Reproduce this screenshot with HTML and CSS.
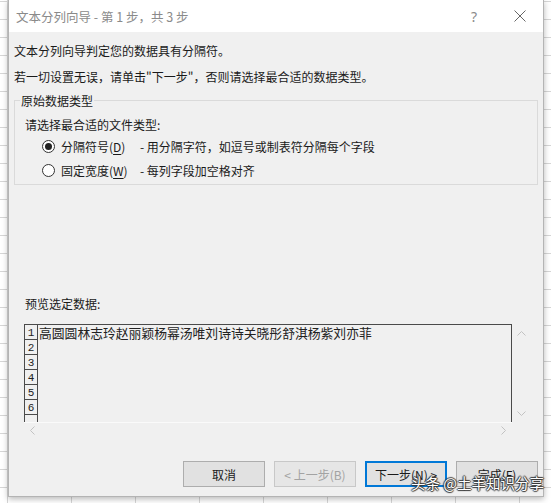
FILE: index.html
```html
<!DOCTYPE html>
<html lang="zh-CN">
<head>
<meta charset="utf-8">
<title>文本分列向导</title>
<link rel="stylesheet" href="styles.css">
</head>
<body>
<div class="dialog">
  <div class="titlebar">
    <span class="title">文本分列向导 - 第 1 步，共 3 步</span>
    <span class="tb-btn help">?</span>
    <span class="tb-btn close">
      <svg width="12" height="12" viewBox="0 0 12 12"><path d="M0.5 0.5 L11.5 11.5 M11.5 0.5 L0.5 11.5" stroke="#666" stroke-width="1" fill="none"/></svg>
    </span>
  </div>
  <div class="body">
    <p class="line first">文本分列向导判定您的数据具有分隔符。</p>
    <p class="line second">若一切设置无误，请单击"下一步"，否则请选择最合适的数据类型。</p>
    <fieldset class="group">
      <legend>原始数据类型</legend>
      <p class="prompt">请选择最合适的文件类型:</p>
      <div class="radio-row row1">
        <span class="radio checked"></span>
        <span class="rlabel">分隔符号(<u>D</u>)</span>
        <span class="rdesc">- 用分隔字符，如逗号或制表符分隔每个字段</span>
      </div>
      <div class="radio-row row2">
        <span class="radio"></span>
        <span class="rlabel">固定宽度(<u>W</u>)</span>
        <span class="rdesc">- 每列字段加空格对齐</span>
      </div>
    </fieldset>
    <p class="preview-label">预览选定数据:</p>
    <div class="preview">
      <div class="pv-content">
        <div class="pv-row top"><span class="num">1</span><span class="data">高圆圆林志玲赵丽颖杨幂汤唯刘诗诗关晓彤舒淇杨紫刘亦菲</span></div>
        <div class="pv-row"><span class="num">2</span><span class="data"></span></div>
        <div class="pv-row"><span class="num">3</span><span class="data"></span></div>
        <div class="pv-row"><span class="num">4</span><span class="data"></span></div>
        <div class="pv-row"><span class="num">5</span><span class="data"></span></div>
        <div class="pv-row"><span class="num">6</span><span class="data"></span></div>
        <div class="pv-row"><span class="num"></span><span class="data"></span></div>
      </div>
      <div class="vscroll">
        <svg width="9" height="5" viewBox="0 0 9 5"><path d="M0.5 4.5 L4.5 0.5 L8.5 4.5" stroke="#c2c2c2" fill="none"/></svg>
        <svg width="9" height="5" viewBox="0 0 9 5"><path d="M0.5 0.5 L4.5 4.5 L8.5 0.5" stroke="#c2c2c2" fill="none"/></svg>
      </div>
      <div class="hscroll">
        <svg width="5" height="9" viewBox="0 0 5 9"><path d="M4.5 0.5 L0.5 4.5 L4.5 8.5" stroke="#c2c2c2" fill="none"/></svg>
        <svg width="5" height="9" viewBox="0 0 5 9"><path d="M0.5 0.5 L4.5 4.5 L0.5 8.5" stroke="#c2c2c2" fill="none"/></svg>
      </div>
    </div>
    <div class="buttons">
      <button class="btn">取消</button>
      <button class="btn disabled">&lt; 上一步(B)</button>
      <button class="btn default">下一步(N) &gt;</button>
      <button class="btn">完成(F)</button>
    </div>
  </div>
</div>
<div class="watermark">头条 @土羊知识分享</div>
</body>
</html>
```
FILE: styles.css
```css
* { box-sizing: border-box; }
html, body { margin: 0; padding: 0; }
body {
  width: 551px;
  height: 503px;
  overflow: hidden;
  position: relative;
  background-color: #ffffff;
  background-image:
    repeating-linear-gradient(90deg, transparent 0, transparent 7px, #d6d6d6 7px, #d6d6d6 8px, transparent 8px, transparent 64px),
    repeating-linear-gradient(180deg, transparent 0, transparent 1px, #d6d6d6 1px, #d6d6d6 2px, transparent 2px, transparent 18px);
  font-family: "Noto Sans CJK SC", "Noto Sans", sans-serif;
  font-size: 12px;
  color: #1a1a1a;
}
.dialog {
  margin-left: 8px;
  width: 536px;
  height: 497px;
  background: #f0f0f0;
  border: 1px solid #b4b4b4;
  border-top: none;
  box-shadow: 0 2px 6px rgba(0,0,0,0.28);
  display: flex;
  flex-direction: column;
}
.titlebar {
  height: 32px;
  background: #ffffff;
  display: flex;
  align-items: center;
  padding-left: 7px;
  flex-shrink: 0;
}
.title {
  font-size: 12.5px;
  color: #8a8a8a;
  flex: 1;
}
.tb-btn {
  width: 46px;
  height: 32px;
  display: flex;
  align-items: center;
  justify-content: center;
  color: #8a8a8a;
}
.help { font-size: 14px; font-family: "Noto Sans", sans-serif; }
.body {
  flex: 1;
  padding: 10px 5px 9px 5px;
  display: flex;
  flex-direction: column;
}
.line {
  margin: 0;
  line-height: 17px;
}
.second { margin-top: 9px; }
.group {
  margin: 7px 0 0 0;
  width: 524px;
  padding: 0 0 4px 0;
  border: 1px solid #dadada;
}
.group legend {
  margin-left: 5px;
  padding: 0 1px;
  line-height: 17px;
}
.prompt {
  margin: 7px 0 0 10px;
  line-height: 17px;
}
.radio-row {
  display: grid;
  grid-template-columns: 13px 73px auto;
  column-gap: 6px;
  align-items: center;
  height: 20px;
  margin-left: 27px;
}
.row1 { margin-top: 3px; }
.row2 { margin-top: 4px; }
.radio {
  width: 13px;
  height: 13px;
  border: 1px solid #333;
  border-radius: 50%;
  background: #fff;
  display: flex;
  align-items: center;
  justify-content: center;
}
.radio.checked::after {
  content: "";
  width: 7px;
  height: 7px;
  border-radius: 50%;
  background: #222;
}
.rlabel u { text-underline-offset: 2px; }
.preview-label {
  margin: 110px 0 0 11px;
  line-height: 17px;
}
.preview {
  margin: 12px 0 0 10px;
  width: 506px;
  height: 114px;
  display: grid;
  grid-template-columns: 488px 18px;
  grid-template-rows: 98px 16px;
}
.pv-content {
  border: 1px solid #4a4a4a;
  border-bottom: none;
  overflow: hidden;
}
.pv-row {
  display: flex;
  height: 15px;
}
.pv-row.top { height: 15px; }
.num {
  width: 13px;
  flex-shrink: 0;
  border-right: 1px solid #4a4a4a;
  border-bottom: 1px solid #4a4a4a;
  font-family: "Liberation Mono", "DejaVu Sans Mono", monospace;
  font-size: 11px;
  line-height: 17px;
  text-align: center;
  color: #222;
  overflow: hidden;
}
.data {
  padding-left: 1px;
  font-size: 12.8px;
  line-height: 16px;
  color: #222;
  white-space: nowrap;
}
.vscroll {
  display: flex;
  flex-direction: column;
  justify-content: space-between;
  align-items: center;
  padding: 7px 0 6px 0;
}
.hscroll {
  display: flex;
  justify-content: space-between;
  align-items: center;
  padding: 0 6px 0 6px;
  border-top: 1px solid #fafafa;
}
.buttons {
  margin-top: auto;
  display: flex;
  justify-content: flex-end;
  gap: 9px;
}
.btn {
  width: 82px;
  height: 26px;
  font-family: "Noto Sans CJK SC", "Noto Sans", sans-serif;
  font-size: 12px;
  color: #1a1a1a;
  background: #e1e1e1;
  border: 1px solid #adadad;
  padding: 0;
}
.btn.disabled {
  color: #a3a3a3;
  background: #e6e6e6;
  border-color: #c8c8c8;
}
.btn.default {
  border: 2px solid #0078d7;
}
.watermark {
  position: absolute;
  left: 411px;
  top: 473px;
  font-size: 14.5px;
  line-height: 20px;
  color: #ffffff;
  white-space: nowrap;
  text-shadow: 1px 0 1px #333, -1px 0 1px #333, 0 1px 1px #333, 0 -1px 1px #333;
}
```
